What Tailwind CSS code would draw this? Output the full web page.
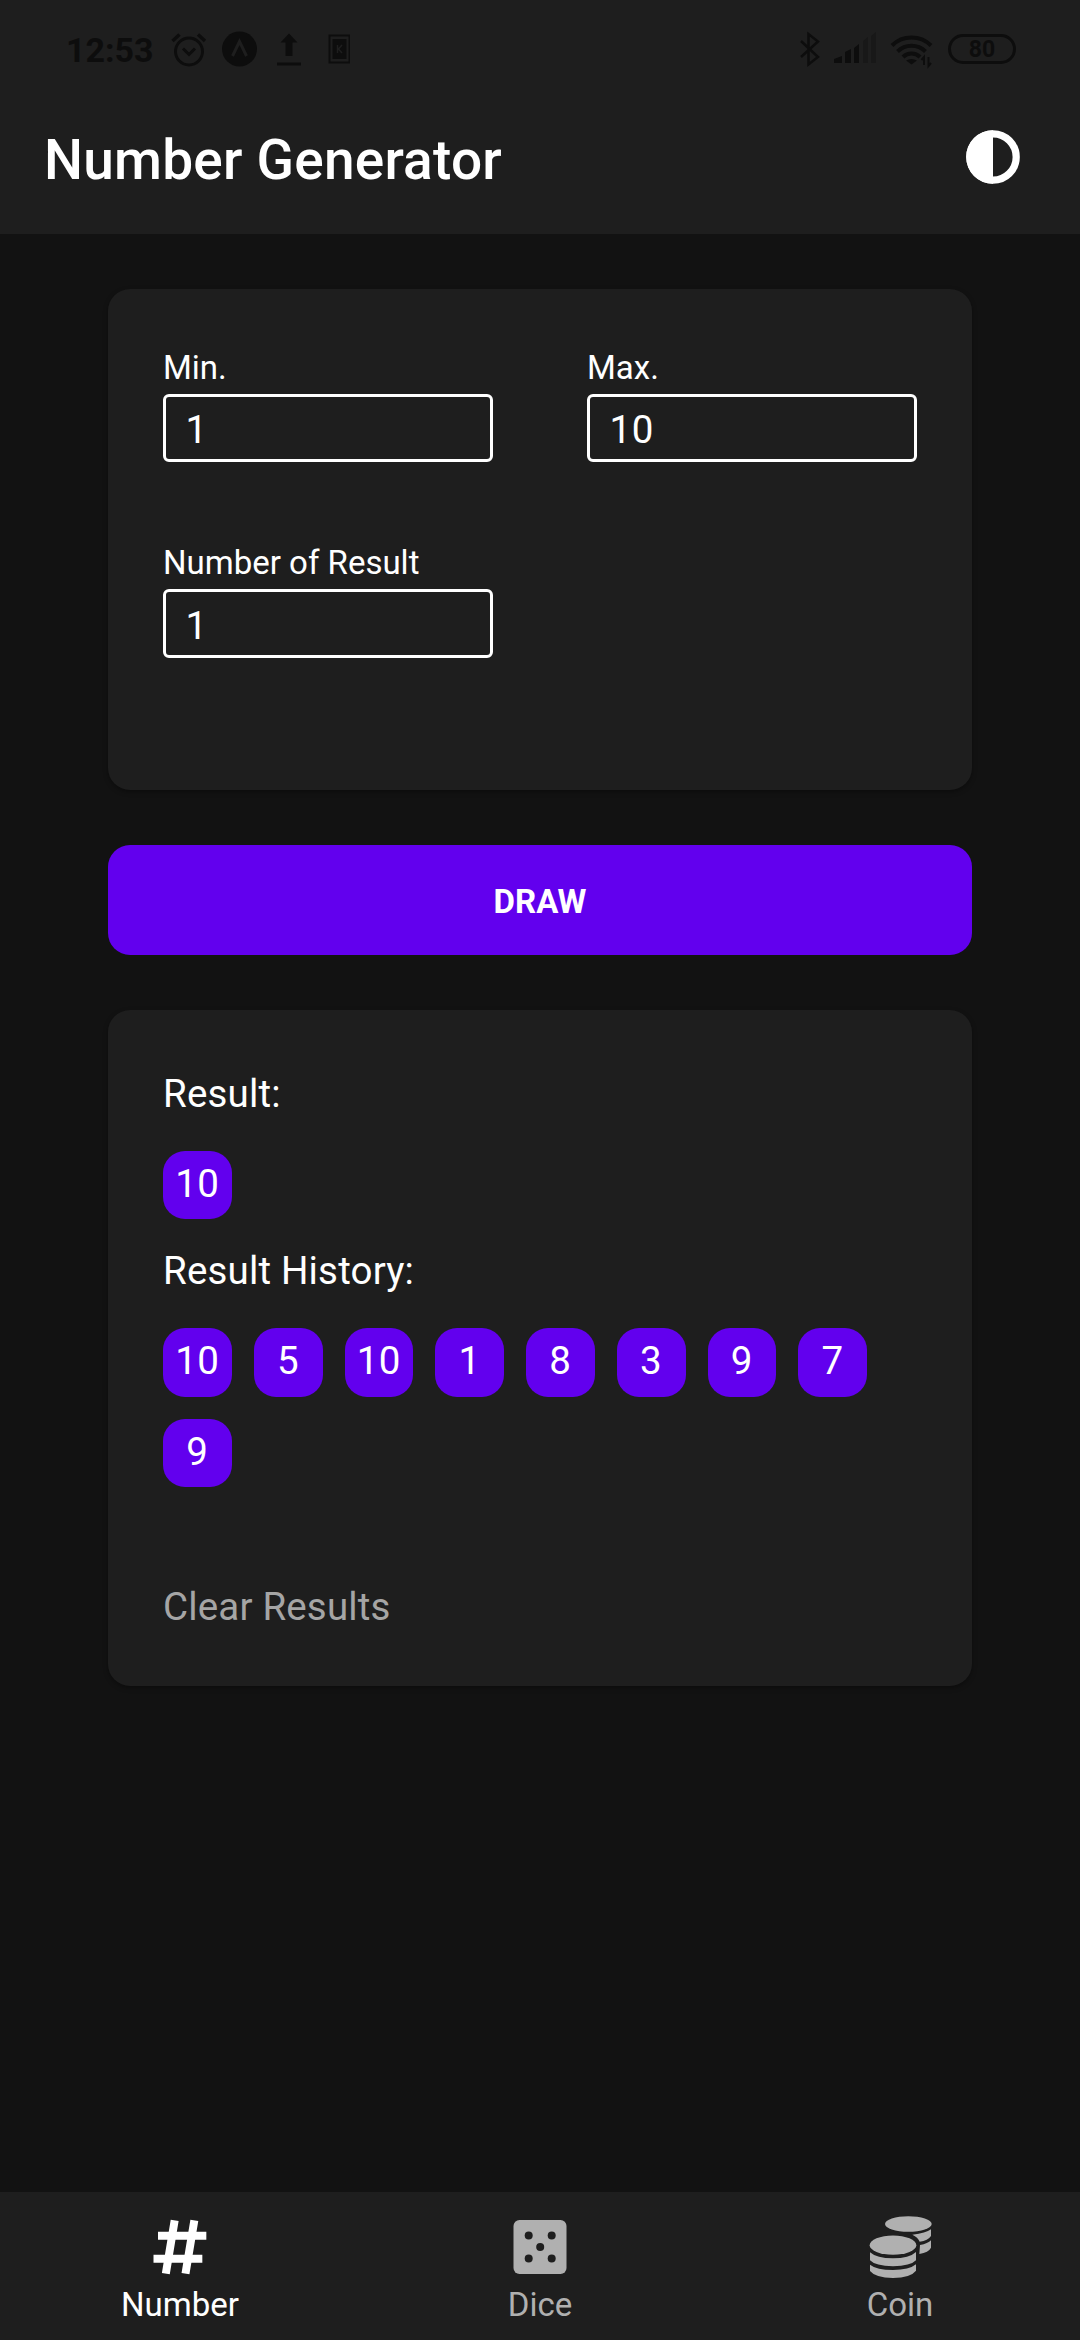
<!DOCTYPE html>
<html lang="en">
<head>
<meta charset="utf-8">
<title>Number Generator</title>
<script src="https://cdn.jsdelivr.net/npm/@tailwindcss/browser@4"></script>
</head>
<body class="flex h-[2340px] w-[1080px] flex-col overflow-hidden bg-[#121212] font-['Roboto',sans-serif] text-white">

<header class="h-[234px] shrink-0 bg-[#1e1e1e]">
  <!-- status bar -->
  <div class="flex h-[100px] items-start justify-between text-[#0d0d0d]">
    <div class="flex pl-[66px] pt-[30px]">
      <span class="h-10 w-[104px] text-[34px] font-bold leading-10">12:53</span>
      <svg class="h-10 w-[180px]" viewBox="170 30 180 40" fill="none" stroke="currentColor">
        <circle cx="189" cy="51.500" r="13.500" stroke-width="3"/>
        <path d="M172.500 41l7-6.500M205 41l-7-6.500" stroke-width="3.500"/>
        <path d="M183 48.500l6 6 6-6" stroke-width="3"/>
        <circle cx="239.500" cy="49" r="17.500" fill="currentColor" stroke="none"/>
        <path d="M232.500 56l7-14.500 7 14.500" stroke="#1e1e1e" stroke-width="3"/>
        <path d="M277 64h24" stroke-width="3"/>
        <path d="M289 33.500l8.500 9h-5v13.500h-7V42.500h-5z" fill="currentColor" stroke="none"/>
        <path d="M329.500 35.500h20v27h-20z" stroke-width="2"/>
        <path d="M332.500 39h14v20h-14z" fill="currentColor" stroke="none"/>
        <path d="M337.500 45v8M342 45l-3.500 4 3.500 4" stroke="#1e1e1e" stroke-width="1.500"/>
      </svg>
    </div>
    <div class="flex items-start pt-[30px]">
      <svg class="h-10 w-[148px]" viewBox="800 30 148 40" fill="none" stroke="currentColor">
        <path d="M801 41l17 16-9.500 7.500V34l9.500 7.500L801 57" stroke-width="2.500"/>
        <path d="M834 63v-4l8-3v7zM845 63V52l6-3v14zM854 63V48l5-4v19z" fill="currentColor" stroke="none"/>
        <path d="M863 63V41l5-4v26zM871 63V36l5-4v31z" fill="#181818" stroke="none"/>
        <path d="M892 45.500a28 28 0 0 1 39 0M897.500 51.500a20 20 0 0 1 28 0M903 57a12 12 0 0 1 17 0" stroke-width="4"/>
        <path d="M906 60.500q5.500-3 11 0l-5.500 4z" fill="currentColor" stroke="none"/>
        <path d="M924 65v-8l-2.500 3M928.500 57v9l2.500-3" stroke-width="2"/>
      </svg>
      <div class="mr-16 mt-1 flex h-[30px] w-[68px] items-center justify-center rounded-full border-[3px] border-[#0d0d0d] text-[23px] font-bold leading-none">80</div>
    </div>
  </div>
  <!-- title bar -->
  <div class="flex h-[134px] items-start justify-between pl-11 pr-[54px]">
    <h1 class="pt-7 text-[55px] font-medium leading-[64px] tracking-[0.22px]">Number Generator</h1>
    <svg class="mt-6 size-[66px]" viewBox="0 0 512 512">
      <circle cx="256" cy="256" r="180" fill="none" stroke="#fff" stroke-width="56"/>
      <path d="M256 48a208 208 0 0 0 0 416z" fill="#fff"/>
    </svg>
  </div>
</header>

<main class="flex flex-1 flex-col gap-[55px] px-[108px] pt-[55px]">
  <section class="grid h-[501px] shrink-0 grid-cols-[330px_330px] content-start gap-x-[94px] gap-y-[81px] rounded-[22px] bg-[#1e1e1e] px-[55px] pt-[59px] shadow-[0_2px_5px_rgba(0,0,0,0.35)]">
    <div>
      <div class="h-[46px] text-[33px] leading-10">Min.</div>
      <div class="h-[68px] rounded-[6px] border-[3px] border-white pl-[19.5px] text-[38.5px] leading-[66px] tracking-[0.6px]">1</div>
    </div>
    <div>
      <div class="h-[46px] text-[33px] leading-10">Max.</div>
      <div class="h-[68px] rounded-[6px] border-[3px] border-white pl-[19.5px] text-[38.5px] leading-[66px] tracking-[0.6px]">10</div>
    </div>
    <div>
      <div class="h-[46px] text-[33px] leading-10">Number of Result</div>
      <div class="h-[69px] rounded-[6px] border-[3px] border-white pl-[19.5px] text-[38.5px] leading-[67px] tracking-[0.6px]">1</div>
    </div>
  </section>

  <button class="h-[110px] shrink-0 rounded-[22px] bg-[#6200ee] pt-[3px] text-[33px] font-bold">DRAW</button>

  <section class="h-[676px] shrink-0 rounded-[22px] bg-[#1e1e1e] px-[55px] pt-[55px] text-[38.5px] leading-[57px] tracking-[0.17px] shadow-[0_2px_5px_rgba(0,0,0,0.35)]">
    <div>Result:</div>
    <div class="mt-[28.5px] flex text-center leading-[66px] tracking-[0.6px]">
      <span class="size-[68.75px] rounded-[22px] bg-[#6200ee]">10</span>
    </div>
    <div class="mt-[23px]">Result History:</div>
    <div class="mt-[28.5px] flex flex-wrap gap-[22px] text-center leading-[66px] tracking-[0.6px]">
      <span class="size-[68.75px] rounded-[22px] bg-[#6200ee]">10</span>
      <span class="size-[68.75px] rounded-[22px] bg-[#6200ee]">5</span>
      <span class="size-[68.75px] rounded-[22px] bg-[#6200ee]">10</span>
      <span class="size-[68.75px] rounded-[22px] bg-[#6200ee]">1</span>
      <span class="size-[68.75px] rounded-[22px] bg-[#6200ee]">8</span>
      <span class="size-[68.75px] rounded-[22px] bg-[#6200ee]">3</span>
      <span class="size-[68.75px] rounded-[22px] bg-[#6200ee]">9</span>
      <span class="size-[68.75px] rounded-[22px] bg-[#6200ee]">7</span>
      <span class="size-[68.75px] rounded-[22px] bg-[#6200ee]">9</span>
    </div>
    <div class="mt-[91px] text-[#a5a5a5]">Clear Results</div>
  </section>
</main>

<nav class="grid h-[148px] shrink-0 grid-cols-3 bg-[#1e1e1e] pt-[22px] text-[33px] leading-10 text-[#b0b0b0]">
  <div class="flex flex-col items-center text-white">
    <svg class="h-[66px] w-[66px]" viewBox="143 102 198 198" fill="none" stroke="#fff" stroke-width="24">
      <path d="M226 121L199.500 281M285 121L258.500 281"/>
      <path d="M176 167H321M162.500 236.500H309"/>
    </svg>
    <span class="mt-[5px]">Number</span>
  </div>
  <div class="flex flex-col items-center">
    <svg class="h-[66px] w-[66px]" viewBox="0 0 66 66">
      <rect x="6.500" y="6" width="53" height="54" rx="6" fill="#b0b0b0"/>
      <g fill="#1e1e1e">
        <circle cx="21.700" cy="21.500" r="4"/><circle cx="44.700" cy="21.500" r="4"/>
        <circle cx="33.200" cy="33" r="4"/>
        <circle cx="21.700" cy="44.500" r="4"/><circle cx="44.700" cy="44.500" r="4"/>
      </g>
    </svg>
    <span class="mt-[5px]">Dice</span>
  </div>
  <div class="flex flex-col items-center">
    <svg class="h-[66px] w-[66px]" viewBox="141 102 198 198" fill="#b0b0b0">
      <ellipse cx="265" cy="132" rx="70" ry="23.500"/>
      <path d="M277 164Q318 160 333 148V168Q324 182 299 185Q294 172 277 164Z"/>
      <path d="M300 195Q324 191 333 181V203Q326 217 298 222Z"/>
      <ellipse cx="219" cy="195.500" rx="70" ry="29"/>
      <path d="M150 217Q170 235 219 235Q268 235 288 216V241Q272 258 219 259Q166 258 150 241Z"/>
      <path d="M150 254Q170 270 219 270Q268 270 288 253V272Q272 293 219 294Q166 293 150 273Z"/>
    </svg>
    <span class="mt-[5px]">Coin</span>
  </div>
</nav>
</body>
</html>
